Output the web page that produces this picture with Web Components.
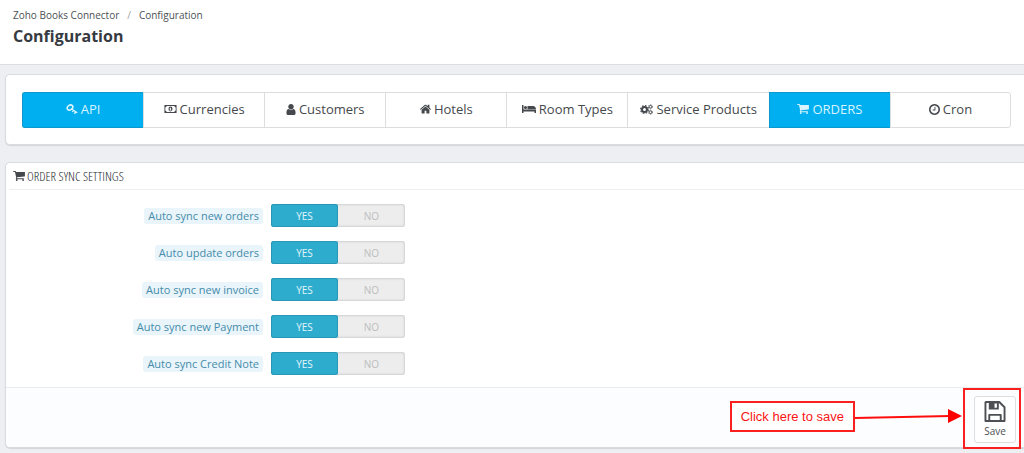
<!DOCTYPE html>
<html lang="en">
<head>
<meta charset="utf-8">
<meta name="viewport" content="width=device-width, initial-scale=1">
<title>Zoho Books Connector - Configuration</title>
<style>
  html { background: #eeeff2; }
  body { margin: 0; background: #eeeff2; color: #414549; font: 12px/18px "Open Sans", "Noto Sans", sans-serif; overflow-x: hidden; }
</style>
</head>
<body>
<config-page></config-page>
<script>
const define = (name, markup, setup) => {
  const template = document.createElement('template');
  template.innerHTML = markup;
  customElements.define(name, class extends HTMLElement {
    constructor() {
      super();
      this.attachShadow({ mode: 'open' }).append(template.content.cloneNode(true));
    }
    connectedCallback() { if (setup) setup(this, this.shadowRoot); }
  });
};

const ICONS = {
  cart: ['64 256 1664 1408', '<path d="M704 1536q0 52-38 90t-90 38-90-38-38-90 38-90 90-38 90 38 38 90zm896 0q0 52-38 90t-90 38-90-38-38-90 38-90 90-38 90 38 38 90zm128-1088v512q0 24-16.500 42.500t-40.500 21.500l-1044 122q13 60 13 70 0 16-24 64h920q26 0 45 19t19 45-19 45-45 19h-1024q-26 0-45-19t-19-45q0-11 8-31.500t16-36 21.500-40 15.500-29.500l-177-823h-204q-26 0-45-19t-19-45 19-45 45-19h256q16 0 28.500 6.500t19.500 15.500 13 24.500 8 26 5.500 29.500 4.500 26h1201q26 0 45 19t19 45z"/>'],
  user: ['256 128 1280 1536', '<path d="M1536 1399q0 109-62.500 187t-150.500 78h-854q-88 0-150.500-78t-62.500-187q0-85 8.500-160.500t31.500-152 58.500-131 94-89 134.500-34.500q131 128 313 128t313-128q76 0 134.500 34.500t94 89 58.500 131 31.500 152 8.500 160.500zm-256-887q0 159-112.500 271.500t-271.500 112.500-271.500-112.500-112.500-271.500 112.500-271.500 271.500-112.500 271.500 112.500 112.500 271.500z"/>'],
  home: ['89 250 1614 1286', '<path d="M1472 992v480q0 26-19 45t-45 19h-384v-384h-256v384h-384q-26 0-45-19t-19-45v-480q0-1 .5-3t.5-3l575-474 575 474q1 2 1 6zm223-69l-62 74q-8 9-21 11h-3q-13 0-21-7l-692-577-692 577q-12 8-24 7-13-2-21-11l-62-74q-8-10-7-23.500t11-21.500l719-599q32-26 76-26t76 26l244 204v-195q0-14 9-23t23-9h192q14 0 23 9t9 23v408l219 182q10 8 11 21.500t-7 23.500z"/>'],
  clock: ['128 128 1536 1536', '<path d="M1024 544v448q0 14-9 23t-23 9h-320q-14 0-23-9t-9-23v-64q0-14 9-23t23-9h224v-352q0-14 9-23t23-9h64q14 0 23 9t9 23zm416 352q0-148-73-273t-198-198-273-73-273 73-198 198-73 273 73 273 198 198 273 73 273-73 198-198 73-273zm224 0q0 209-103 385.500t-279.500 279.500-385.500 103-385.500-103-279.500-279.500-103-385.500 103-385.500 279.500-279.500 385.500-103 385.500 103 279.500 279.500 103 385.500z"/>'],
  key: ['0 0 22 20', '<ellipse cx="7" cy="7" rx="6" ry="4.500" transform="rotate(-35 7 7)" fill="none" stroke="currentColor" stroke-width="3.200"/><path fill="none" stroke="currentColor" stroke-width="3" d="M9.500 9.500L21.500 17.500M14 11L12 16M18.500 14.500L16 19.500"/>'],
  money: ['0 0 30 20', '<path fill-rule="evenodd" d="M1 1H29V19H1ZM6 3Q6 6 3 6.500V13.500Q6 14 6 17H24Q24 14 27 13.500V6.500Q24 6 24 3Z"/><path fill-rule="evenodd" d="M15 4.500A4.700 5.500 0 0 1 15 15.500A4.700 5.500 0 0 1 15 4.500ZM14 7L12.500 8.500L13.200 9.300L14 8.800V12H12.700V13.300H17.300V12H16V7Z"/>'],
  bed: ['0 0 28 18', '<path d="M0 1H3V10H28V17H25V14H3V17H0Z"/><circle cx="7" cy="6" r="3.200"/><path d="M11 9.500V3H22Q27.500 3.500 28 9.500Z"/>'],
  cogs: ['0 0 26 22', '<circle cx="9" cy="11" r="5" fill="none" stroke="currentColor" stroke-width="4"/><circle cx="9" cy="11" r="7.800" fill="none" stroke="currentColor" stroke-width="2.400" stroke-dasharray="3.200 2.926"/><g fill="none" stroke="currentColor"><circle cx="21" cy="5.500" r="2.700" stroke-width="2"/><circle cx="21" cy="5.500" r="4.200" stroke-width="1.500" stroke-dasharray="2 2.400"/><circle cx="21" cy="16.500" r="2.700" stroke-width="2"/><circle cx="21" cy="16.500" r="4.200" stroke-width="1.500" stroke-dasharray="2 2.400"/></g>'],
  save: ['0 0 22 22', '<path fill="none" stroke="currentColor" stroke-width="2" stroke-linejoin="round" d="M1.500 1H15.500L21 6.500V21H1V1.500ZM5 21V14.500H17V21"/><path fill-rule="evenodd" d="M4.500 1H15V9H4.500ZM10.500 2.500V7H13V2.500Z"/>'],
};

define('ui-icon', `
  <style>
    :host { display: inline-flex; flex: none; width: var(--w, 12px); height: var(--h, 10px); }
    svg { width: 100%; height: 100%; fill: currentColor; display: block; }
  </style>
  <svg aria-hidden="true"></svg>`, (el, root) => {
  const [box, body] = ICONS[el.getAttribute('name')];
  const svg = root.querySelector('svg');
  svg.setAttribute('viewBox', box);
  svg.innerHTML = body;
});

define('page-header', `
  <style>
    :host { display: block; box-sizing: border-box; height: 65px; padding: 6px 13px; background: #fff; border-bottom: 1px solid #dcdee1; }
    ol { display: flex; margin: 0; padding: 0; list-style: none; font-size: 10px; line-height: 18px; color: #4c5054; }
    li + li::before { content: "/"; padding: 0 8px; color: #9a9fa0; }
    a { color: inherit; text-decoration: none; }
    h1 { margin: 1px 0 0; font-size: 16px; line-height: 22px; font-weight: 700; color: #363a41; }
  </style>
  <nav aria-label="Breadcrumb"><ol><li><a href="#">Zoho Books Connector</a></li><li><a href="#">Configuration</a></li></ol></nav>
  <h1>Configuration</h1>`);

define('ui-panel', `
  <style>
    :host { display: block; background: #fff; border: 1px solid #d8dbe0; border-right: 0; border-radius: 5px 0 0 5px; box-shadow: 0 1px 1px #d3d6da; }
  </style>
  <slot></slot>`);

define('nav-tabs', `
  <style>
    :host { display: flex; padding: 17px 13px 16px 16px; }
  </style>
  <slot></slot>`);

define('nav-tab', `
  <style>
    :host { display: flex; flex: 1 1 0; min-width: max-content; }
    a { flex: 1; display: flex; align-items: center; justify-content: center; gap: 3px; box-sizing: border-box; height: 36px; padding: 0 12px 2px;
        border: 1px solid #dbdddf; border-right-width: 0; background: #fff; color: #45494d; font-size: 13px; text-decoration: none; white-space: nowrap; }
    :host(:first-child) a { border-radius: 3px 0 0 3px; }
    :host(:last-child) a { border-right-width: 1px; border-radius: 0 3px 3px 0; }
    :host([active]) a { background: #00aff0; border-color: #0c98cd; color: #d9f4fe; }
  </style>
  <a href="#"><slot></slot></a>`);

define('panel-heading', `
  <style>
    :host { display: block; margin-left: 3px; border-bottom: 1px solid #eceeef; }
    h2 { display: flex; align-items: center; gap: 2px; margin: 0; padding: 3px 4px; font: 300 13px/20px "Ubuntu Condensed", "Open Sans Condensed Light", "Open Sans Condensed", "Liberation Sans Narrow", sans-serif; color: #25292d; }
    ::slotted(ui-icon) { color: #45494d; }
  </style>
  <h2><slot></slot></h2>`);

define('switch-row', `
  <style>
    :host { display: block; }
    fieldset { display: grid; grid-template-columns: 257px 134px; column-gap: 8px; align-items: center; margin: 0; padding: 0; border: 0; min-width: 0; }
    .name { justify-self: end; padding: 0 4px; border-radius: 3px; background: #e9f5fa; color: #458bab; font-size: 11px; line-height: 16px; white-space: nowrap; }
    .switch { display: flex; box-sizing: border-box; height: 23px; border-radius: 3px; background: #ededed; box-shadow: inset 0 0 2px 1px #d0d1d2; }
    label { position: relative; flex: 1; display: flex; align-items: center; justify-content: center; font-size: 10px; color: #bcbdbe; border-radius: 3px; cursor: pointer; }
    input { position: absolute; inset: 0; width: 100%; height: 100%; margin: 0; appearance: none; opacity: 0; cursor: pointer; }
    label:has(input:checked) { background: #2eacce; box-shadow: inset 0 0 0 1px #2897b5; color: #e3f5fa; }
  </style>
  <fieldset aria-labelledby="name">
    <span class="name" id="name"><slot></slot></span>
    <div class="switch">
      <label><input type="radio" name="value" checked>YES</label>
      <label><input type="radio" name="value">NO</label>
    </div>
  </fieldset>`);

define('save-button', `
  <style>
    :host { display: block; }
    button { display: flex; flex-direction: column; align-items: center; justify-content: flex-end; box-sizing: border-box; width: 42px; height: 47px; margin: 0; padding: 0 0 2px; border: 1px solid #dcdfe1; border-radius: 3px; background: #fff; color: #4c4f53; font: 10px/18px "Open Sans", sans-serif; cursor: pointer; }
    ui-icon { --w: 22px; --h: 21px; }
  </style>
  <button type="button"><ui-icon name="save"></ui-icon><slot></slot></button>`);

define('save-hint', `
  <style>
    :host { position: absolute; right: 3px; top: 0; display: flex; align-items: flex-start; height: 61px; pointer-events: none; }
    .note { box-sizing: border-box; height: 31px; margin-top: 13px; padding: 0 9px; border: 2px solid #fb2020; background: #fff; color: #fb1414; font: 13px/27px "Liberation Sans", Arial, sans-serif; white-space: nowrap; }
    svg { display: block; width: 108px; height: 20px; margin-top: 18px; }
    .frame { box-sizing: border-box; width: 58px; height: 61px; border: 2px solid #fb2020; }
  </style>
  <span class="note"><slot></slot></span>
  <svg viewBox="0 0 108 20" aria-hidden="true"><path d="M0 12L95 10" stroke="#ff0d0d" stroke-width="2"/><path d="M93 3V17L107 10Z" fill="#ff0000"/></svg>
  <span class="frame"></span>`);

define('config-page', `
  <style>
    :host { display: block; }
    main { display: flex; flex-direction: column; gap: 17px; padding: 9px 0 5px 5px; }
    .settings { display: flex; flex-direction: column; gap: 14px; padding: 14px 0 12px; margin: 0; }
    footer { position: relative; display: flex; justify-content: flex-end; padding: 8px 8px 4px 0; background: #fcfdfe; border-top: 1px solid #e7ecf0; border-radius: 0 0 0 5px; }
  </style>
  <page-header></page-header>
  <main>
    <ui-panel>
      <nav-tabs>
        <nav-tab active><ui-icon name="key"></ui-icon>API</nav-tab>
        <nav-tab><ui-icon name="money" style="--w:13px"></ui-icon>Currencies</nav-tab>
        <nav-tab><ui-icon name="user" style="--w:10px;--h:11px"></ui-icon>Customers</nav-tab>
        <nav-tab><ui-icon name="home" style="--w:11px"></ui-icon>Hotels</nav-tab>
        <nav-tab><ui-icon name="bed" style="--w:14px"></ui-icon>Room Types</nav-tab>
        <nav-tab><ui-icon name="cogs" style="--w:13px;--h:11px"></ui-icon>Service Products</nav-tab>
        <nav-tab active><ui-icon name="cart"></ui-icon>ORDERS</nav-tab>
        <nav-tab><ui-icon name="clock" style="--w:11px;--h:11px"></ui-icon>Cron</nav-tab>
      </nav-tabs>
    </ui-panel>
    <ui-panel>
      <panel-heading><ui-icon name="cart"></ui-icon>ORDER SYNC SETTINGS</panel-heading>
      <form class="settings">
        <switch-row>Auto sync new orders</switch-row>
        <switch-row>Auto update orders</switch-row>
        <switch-row>Auto sync new invoice</switch-row>
        <switch-row>Auto sync new Payment</switch-row>
        <switch-row>Auto sync Credit Note</switch-row>
      </form>
      <footer>
        <save-button>Save</save-button>
        <save-hint>Click here to save</save-hint>
      </footer>
    </ui-panel>
  </main>`);
</script>
</body>
</html>
